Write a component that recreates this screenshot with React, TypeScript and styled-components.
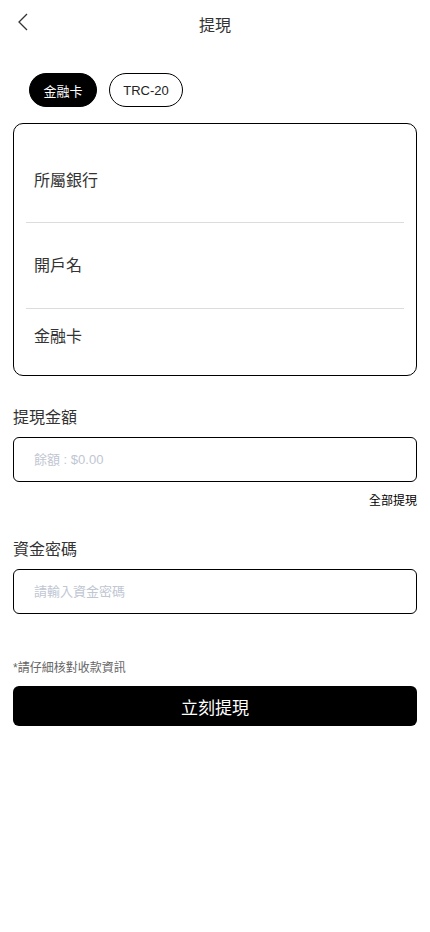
import styled, { createGlobalStyle } from 'styled-components'

const Global = createGlobalStyle`
    body {
        margin: 0;
        background: #fff;
        font-family: "Liberation Sans", "Noto Sans CJK TC", sans-serif;
        color: #333;
    }
`

export default function App() {
    return (
        <Page>
            <Global />
            <Header>
                <Back>
                    <svg width="12" height="18" viewBox="0 0 12 18" fill="none">
                        <polyline points="10,1 2,9 10,17" stroke="#333" strokeWidth="1.3" />
                    </svg>
                </Back>
                <Title>提現</Title>
            </Header>

            {/* 出金方式の切替 */}
            <Tabs>
                <Tab $active $width={68}>金融卡</Tab>
                <Tab $width={74}>TRC-20</Tab>
            </Tabs>

            <Card>
                <Row $top={47} $height={98}>
                    <RowLabel>所屬銀行</RowLabel>
                </Row>
                <Divider />
                <Row $top={33} $height={85}>
                    <RowLabel>開戶名</RowLabel>
                </Row>
                <Divider />
                <Row $top={18} $height={66}>
                    <RowLabel>金融卡</RowLabel>
                </Row>
            </Card>

            <Field>
                <FieldLabel>提現金額</FieldLabel>
                <InputBox placeholder="餘額 : $0.00" />
                <AllLink>全部提現</AllLink>
            </Field>

            <Field $gap={30}>
                <FieldLabel>資金密碼</FieldLabel>
                <InputBox type="password" placeholder="請輸入資金密碼" />
            </Field>

            <Notice>*請仔細核對收款資訊</Notice>
            <Submit>立刻提現</Submit>
        </Page>
    )
}

const Page = styled.div`
    width: 430px;
    min-height: 932px;
    padding: 0 13px;
    box-sizing: border-box;
`

const Header = styled.div`
    height: 47px;
    display: flex;
    align-items: center;
    justify-content: center;
    position: relative;
`

const Back = styled.div`
    position: absolute;
    left: 4px;
    top: 13px;
    display: flex;
`

const Title = styled.div`
    font-size: 16px;
    color: #333;
`

const Tabs = styled.div`
    display: flex;
    gap: 12px;
    padding: 26px 0 0 16px;
`

const Tab = styled.div<{ $active?: boolean; $width: number }>`
    width: ${p => p.$width}px;
    height: 34px;
    box-sizing: border-box;
    border-radius: 17px;
    border: 1px solid #000;
    background: ${p => (p.$active ? '#000' : '#fff')};
    color: ${p => (p.$active ? '#fff' : '#222')};
    font-size: 13px;
    display: flex;
    align-items: center;
    justify-content: center;
`

const Card = styled.div`
    margin-top: 16px;
    border: 1px solid #000;
    border-radius: 10px;
    height: 253px;
    box-sizing: border-box;
`

const Row = styled.div<{ $top: number; $height: number }>`
    height: ${p => p.$height}px;
    padding: ${p => p.$top}px 20px 0;
    box-sizing: border-box;
`

const RowLabel = styled.div`
    font-size: 16px;
    line-height: 20px;
    color: #333;
`

const Divider = styled.div`
    height: 1px;
    background: #dcdcdc;
    margin: 0 12px;
`

const Field = styled.div<{ $gap?: number }>`
    margin-top: ${p => p.$gap ?? 31}px;
    display: flex;
    flex-direction: column;
`

const FieldLabel = styled.div`
    font-size: 16px;
    line-height: 22px;
    color: #333;
    margin-bottom: 8px;
`

const InputBox = styled.input`
    height: 45px;
    border: 1px solid #000;
    border-radius: 6px;
    padding: 0 20px;
    box-sizing: border-box;
    font-size: 13px;
    font-family: inherit;
    background: #fff;
    outline: none;
    &::placeholder {
        color: #c0c6d2;
    }
`

const AllLink = styled.div`
    align-self: flex-end;
    margin-top: 11px;
    font-size: 12px;
    line-height: 16px;
    color: #000;
`

const Notice = styled.div`
    margin-top: 46px;
    font-size: 12px;
    line-height: 16px;
    color: #666;
`

const Submit = styled.button`
    margin-top: 10px;
    width: 100%;
    height: 40px;
    border: none;
    border-radius: 6px;
    background: #000;
    color: #fff;
    font-size: 17px;
    font-family: inherit;
    display: flex;
    align-items: center;
    justify-content: center;
`
